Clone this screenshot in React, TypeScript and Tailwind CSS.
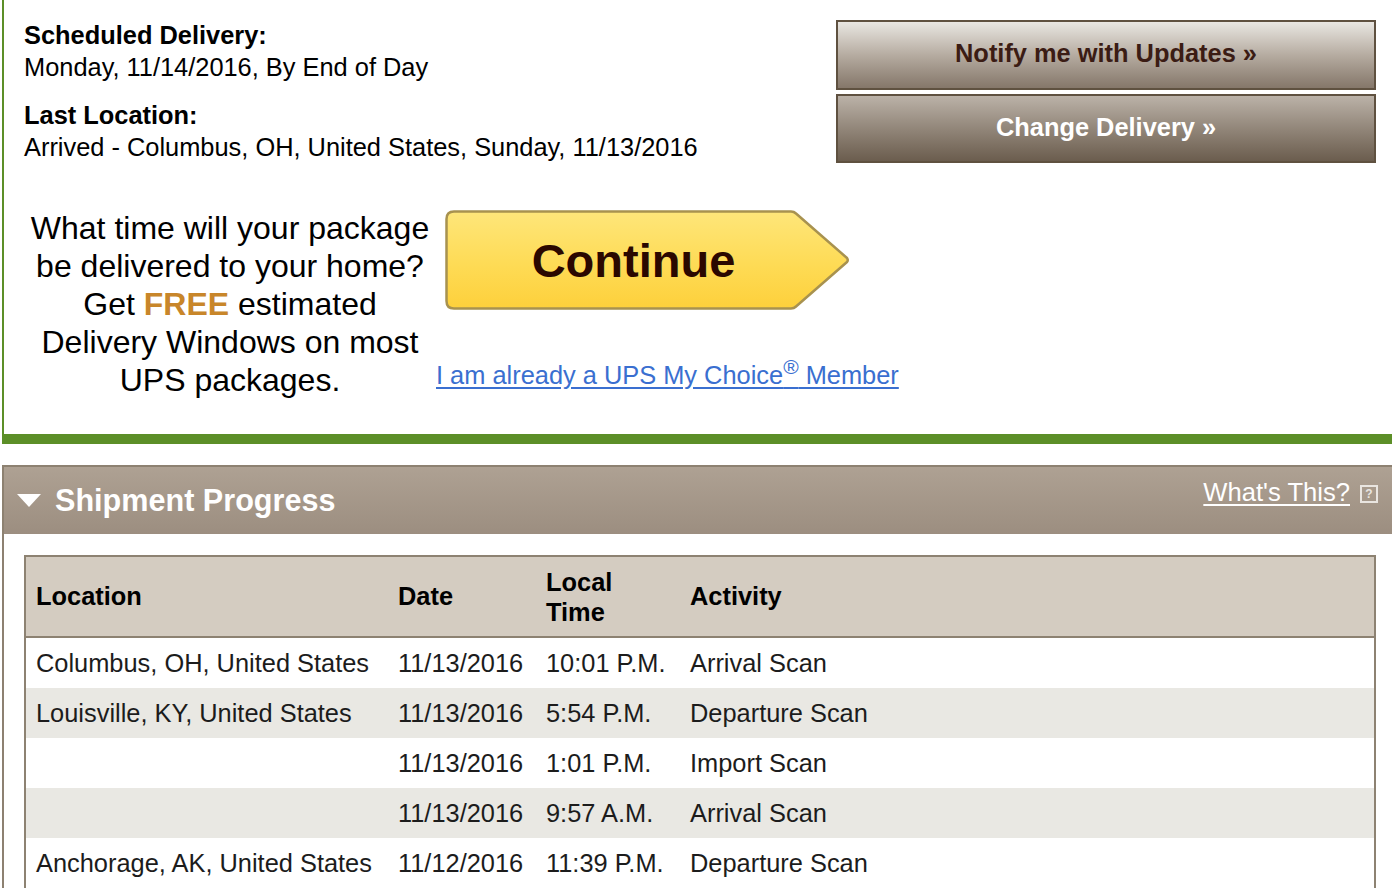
const rows = [
  { location: 'Columbus, OH, United States', date: '11/13/2016', time: '10:01 P.M.', activity: 'Arrival Scan' },
  { location: 'Louisville, KY, United States', date: '11/13/2016', time: '5:54 P.M.', activity: 'Departure Scan' },
  { location: '', date: '11/13/2016', time: '1:01 P.M.', activity: 'Import Scan' },
  { location: '', date: '11/13/2016', time: '9:57 A.M.', activity: 'Arrival Scan' },
  { location: 'Anchorage, AK, United States', date: '11/12/2016', time: '11:39 P.M.', activity: 'Departure Scan' },
];

const ContinueButton = () => (
  <button className="relative ml-[9px] flex h-[100px] w-[405px] items-center justify-center pr-[28px]">
    <svg className="absolute inset-0" width="405" height="100" viewBox="0 0 405 100">
      <defs>
        <linearGradient id="cont" x1="0" y1="0" x2="0" y2="1">
          <stop offset="0" stopColor="#fee67a" />
          <stop offset="0.55" stopColor="#fedb55" />
          <stop offset="1" stopColor="#fdd03b" />
        </linearGradient>
      </defs>
      <path
        d="M9 1.5 H346 Q349 1.5 351 3.5 L402 48 Q403.5 50 402 52 L351 96.5 Q349 98.5 346 98.5 H9 Q1.5 98.5 1.5 91 V9 Q1.5 1.5 9 1.5 Z"
        fill="url(#cont)"
        stroke="#a8924f"
        strokeWidth="2.5"
        strokeLinejoin="round"
      />
    </svg>
    <span className="relative text-[47px] font-bold leading-none text-[#2b0800]">Continue</span>
  </button>
);

const HelpIcon = () => (
  <span className="ml-[10px] mt-[8px] flex h-[18px] w-[18px] items-center justify-center border-2 border-[#e9e5e0] text-[12px] font-bold leading-none text-[#e9e5e0]">
    ?
  </span>
);

export default function App() {
  return (
    <div className="min-h-screen bg-white font-['Liberation_Sans',Arial,sans-serif] text-black">
      <section className="ml-[2px] border-b-[10px] border-l-2 border-[#5c8f28] pb-[35px] pl-5 pr-4 pt-[19px]">
        <div className="flex items-start justify-between">
          <div className="text-[25.4px] leading-[32px]">
            <div>
              <div className="font-bold">Scheduled Delivery:</div>
              <div>Monday, 11/14/2016, By End of Day</div>
            </div>
            <div className="mt-4">
              <div className="font-bold">Last Location:</div>
              <div>Arrived - Columbus, OH, United States, Sunday, 11/13/2016</div>
            </div>
          </div>
          <div className="mt-[1px] flex w-[540px] flex-col gap-[4px]">
            <button className="h-[70px] border-2 border-[#5f5140] bg-gradient-to-b from-[#e9e7e2] via-[#b6aca1] to-[#85776a] pb-[3px] text-[25.4px] font-bold text-[#3b1c14]">
              Notify me with Updates »
            </button>
            <button className="h-[69px] border-2 border-[#5f5140] bg-gradient-to-b from-[#bbb2a8] to-[#6b5d4e] pb-[2px] text-[25.4px] font-bold text-white">
              Change Delivery »
            </button>
          </div>
        </div>
        <div className="mt-[46px] flex items-start">
          <p className="w-[412px] text-center text-[32px] leading-[38px]">
            What time will your package be delivered to your home? Get{' '}
            <span className="font-bold text-[#c8862a]">FREE</span> estimated Delivery Windows on most UPS packages.
          </p>
          <div className="flex flex-col pt-px">
            <ContinueButton />
            <a href="#" className="mt-[49px] text-[25.4px] leading-[32px] text-[#3a6fd0] underline underline-offset-[3px]">
              I am already a UPS My Choice<sup className="text-[21px] leading-none">®</sup> Member
            </a>
          </div>
        </div>
      </section>

      <section className="ml-[2px] mt-[21px] border-l-2 border-t-2 border-[#8d8171]">
        <div className="flex h-[67px] items-start justify-between bg-gradient-to-b from-[#aea193] to-[#9c8e80] pr-[14px]">
          <div className="flex h-full items-center pl-[13px]">
            <svg width="24" height="14" viewBox="0 0 24 14" className="mt-[1px]">
              <path d="M0 0 H24 L12 13 Z" fill="#ffffff" />
            </svg>
            <h2 className="ml-[14px] text-[30.6px] font-bold text-white">Shipment Progress</h2>
          </div>
          <div className="flex items-start pt-[10px]">
            <a href="#" className="text-[25.6px] leading-[30px] text-white underline underline-offset-[3px]">
              What's This?
            </a>
            <HelpIcon />
          </div>
        </div>

        <div className="pb-6 pl-5 pr-4 pt-[21px]">
          <div className="border-[2.5px] border-[#8d8272] text-[25.4px]">
            <div className="grid h-[81px] grid-cols-[362px_148px_144px_1fr] border-b-2 border-[#8d8272] bg-[#d4ccc1] font-bold">
              <div className="flex items-center pl-[10px]">Location</div>
              <div className="flex items-center pl-[10px]">Date</div>
              <div className="flex items-center pl-[10px] leading-[30px]">
                Local
                <br />
                Time
              </div>
              <div className="flex items-center pl-[10px]">Activity</div>
            </div>
            {rows.map((row, i) => (
              <div
                key={i}
                className={`grid h-[50px] grid-cols-[362px_148px_144px_1fr] items-center text-[#1c1c1c] ${
                  i % 2 === 1 ? 'bg-[#e9e8e3]' : 'bg-white'
                }`}
              >
                <div className="pl-[10px]">{row.location}</div>
                <div className="pl-[10px]">{row.date}</div>
                <div className="pl-[10px]">{row.time}</div>
                <div className="pl-[10px]">{row.activity}</div>
              </div>
            ))}
          </div>
        </div>
      </section>
    </div>
  );
}
